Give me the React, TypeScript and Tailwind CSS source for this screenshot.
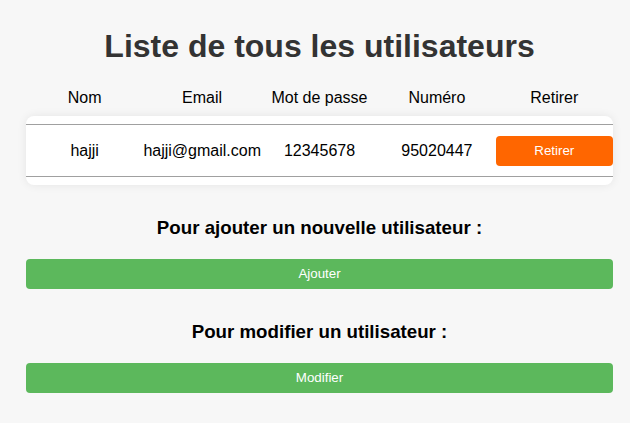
import React from 'react';

const users = [
  { nom: 'hajji', email: 'hajji@gmail.com', password: '12345678', numero: '95020447' },
];

const columns = ['Nom', 'Email', 'Mot de passe', 'Numéro', 'Retirer'];

const App = () => {
  return (
    <div className="min-h-[423px] bg-[#f7f7f7] pl-[26px] pr-[17px] pt-[28px] pb-[31px] font-['Liberation_Sans',Arial,sans-serif] text-black">
      <h1 className="text-center text-[32px] leading-[37px] font-bold text-[#333333]">
        Liste de tous les utilisateurs
      </h1>

      {/* Table header */}
      <div className="mt-[24px] grid grid-cols-5 text-center text-[16px] leading-[18px]">
        {columns.map((c) => (
          <div key={c}>{c}</div>
        ))}
      </div>

      {/* Table body */}
      <div className="mt-[9px] rounded-[8px] bg-white py-2 shadow-[0_0_10px_rgba(0,0,0,0.08)]">
        {users.map((u) => (
          <div
            key={u.email}
            className="grid h-[53px] grid-cols-5 items-center border-y border-[#a0a0a0] text-center text-[16px] leading-[18px]"
          >
            <div>{u.nom}</div>
            <div>{u.email}</div>
            <div>{u.password}</div>
            <div>{u.numero}</div>
            <button className="h-[30px] rounded-[4px] bg-[#ff6600] text-[13.33px] text-white">
              Retirer
            </button>
          </div>
        ))}
      </div>

      <h3 className="mt-[32px] text-center text-[18.72px] leading-[22px] font-bold">
        Pour ajouter un nouvelle utilisateur :
      </h3>
      <button className="mt-[20px] block h-[30px] w-full rounded-[4px] bg-[#5cb85c] text-[13.33px] text-white">
        Ajouter
      </button>

      <h3 className="mt-[32px] text-center text-[18.72px] leading-[22px] font-bold">
        Pour modifier un utilisateur :
      </h3>
      <button className="mt-[20px] block h-[30px] w-full rounded-[4px] bg-[#5cb85c] text-[13.33px] text-white">
        Modifier
      </button>
    </div>
  );
};

export default App;
